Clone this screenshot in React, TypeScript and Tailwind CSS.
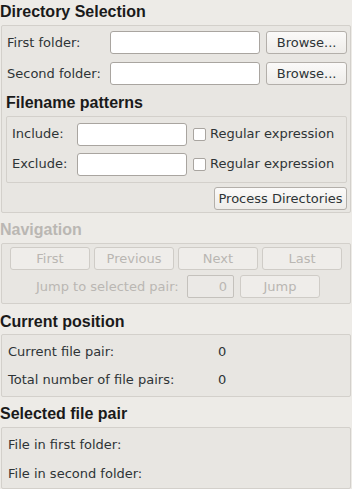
export default function App() {
  const heading = "font-['Liberation_Sans',Arial,sans-serif] font-bold text-[16px] leading-none";
  const box = "border border-[#d3d0cb] rounded-[2px] bg-[#e8e6e2]";
  const input = "h-[23px] border border-[#a9a5a0] rounded-[3px] bg-white";
  const button =
    "h-[23px] border border-[#b3afaa] rounded-[3px] bg-gradient-to-b from-[#fbfaf9] to-[#eeece9] flex items-center justify-center text-[#2e3436]";
  const disabledBtn =
    "h-[23px] border border-[#cfccc7] rounded-[3px] bg-[#efedea] flex items-center justify-center text-[#b9b6b2]";

  return (
    <div className="w-[352px] h-[489px] overflow-hidden bg-[#edebe7] font-['DejaVu_Sans',sans-serif] text-[13px] text-[#2e3436] flex flex-col">
      {/* Directory Selection */}
      <div className={`${heading} h-[25px] pt-[4px] text-[#1a1a1a]`}>Directory Selection</div>
      <div className={`${box} mx-[1px] h-[188px] flex flex-col pl-[5px] pr-[3px] pt-[5px]`}>
        <div className="flex items-center h-[23px]">
          <span className="w-[103px]">First folder:</span>
          <div className={`${input} w-[151px]`} />
          <div className={`${button} w-[81px] ml-[6px]`}>Browse...</div>
        </div>
        <div className="flex items-center h-[23px] mt-[8px]">
          <span className="w-[103px]">Second folder:</span>
          <div className={`${input} w-[151px]`} />
          <div className={`${button} w-[81px] ml-[6px]`}>Browse...</div>
        </div>
        <div className={`${heading} h-[31px] pt-[10px] -ml-[1px] text-[#1a1a1a]`}>Filename patterns</div>
        <div className={`${box} ml-[-1px] w-[341px] h-[67px] flex flex-col pl-[5px] pt-[6px]`}>
          <div className="flex items-center h-[22px]">
            <span className="w-[65px]">Include:</span>
            <div className={`${input} w-[110px] h-[22px]`} />
            <div className="w-[13px] h-[13px] ml-[6px] border border-[#a9a5a0] rounded-[2px] bg-white" />
            <span className="ml-[4px]">Regular expression</span>
          </div>
          <div className="flex items-center h-[22px] mt-[8px]">
            <span className="w-[65px]">Exclude:</span>
            <div className={`${input} w-[110px] h-[22px]`} />
            <div className="w-[13px] h-[13px] ml-[6px] border border-[#a9a5a0] rounded-[2px] bg-white" />
            <span className="ml-[4px]">Regular expression</span>
          </div>
        </div>
        <div className="flex justify-end mt-[4px]">
          <div className={`${button} w-[133px] h-[22px]`}>Process Directories</div>
        </div>
      </div>

      {/* Navigation */}
      <div className={`${heading} h-[30px] pt-[9px] text-[#bab7b3]`}>Navigation</div>
      <div className={`${box} mx-[1px] h-[61px] flex flex-col pt-[3px] pl-[8px]`}>
        <div className="flex gap-[4px]">
          <div className={`${disabledBtn} w-[80px]`}>First</div>
          <div className={`${disabledBtn} w-[80px]`}>Previous</div>
          <div className={`${disabledBtn} w-[80px]`}>Next</div>
          <div className={`${disabledBtn} w-[80px]`}>Last</div>
        </div>
        <div className="flex items-center mt-[5px] h-[23px]">
          <span className="ml-[26px] w-[151px] text-[#bab7b3]">Jump to selected pair:</span>
          <div className="w-[47px] h-[23px] border border-[#c4c1bc] rounded-[2px] bg-[#ebe9e6] flex items-center justify-end pr-[6px] text-[#bab7b3]">0</div>
          <div className={`${disabledBtn} w-[80px] ml-[6px]`}>Jump</div>
        </div>
      </div>

      {/* Current position */}
      <div className={`${heading} h-[30px] pt-[10px] text-[#1a1a1a]`}>Current position</div>
      <div className={`${box} mx-[1px] h-[63px] flex flex-col pl-[6px] pt-[8px]`}>
        <div className="flex h-[17px] items-center">
          <span className="w-[210px]">Current file pair:</span>
          <span>0</span>
        </div>
        <div className="flex h-[17px] items-center mt-[11px]">
          <span className="w-[210px]">Total number of file pairs:</span>
          <span>0</span>
        </div>
      </div>

      {/* Selected file pair */}
      <div className={`${heading} h-[30px] pt-[9px] text-[#1a1a1a]`}>Selected file pair</div>
      <div className={`${box} mx-[1px] h-[62px] flex flex-col pl-[6px] pt-[8px]`}>
        <div className="h-[17px] flex items-center">File in first folder:</div>
        <div className="h-[17px] flex items-center mt-[12px]">File in second folder:</div>
      </div>
    </div>
  );
}
